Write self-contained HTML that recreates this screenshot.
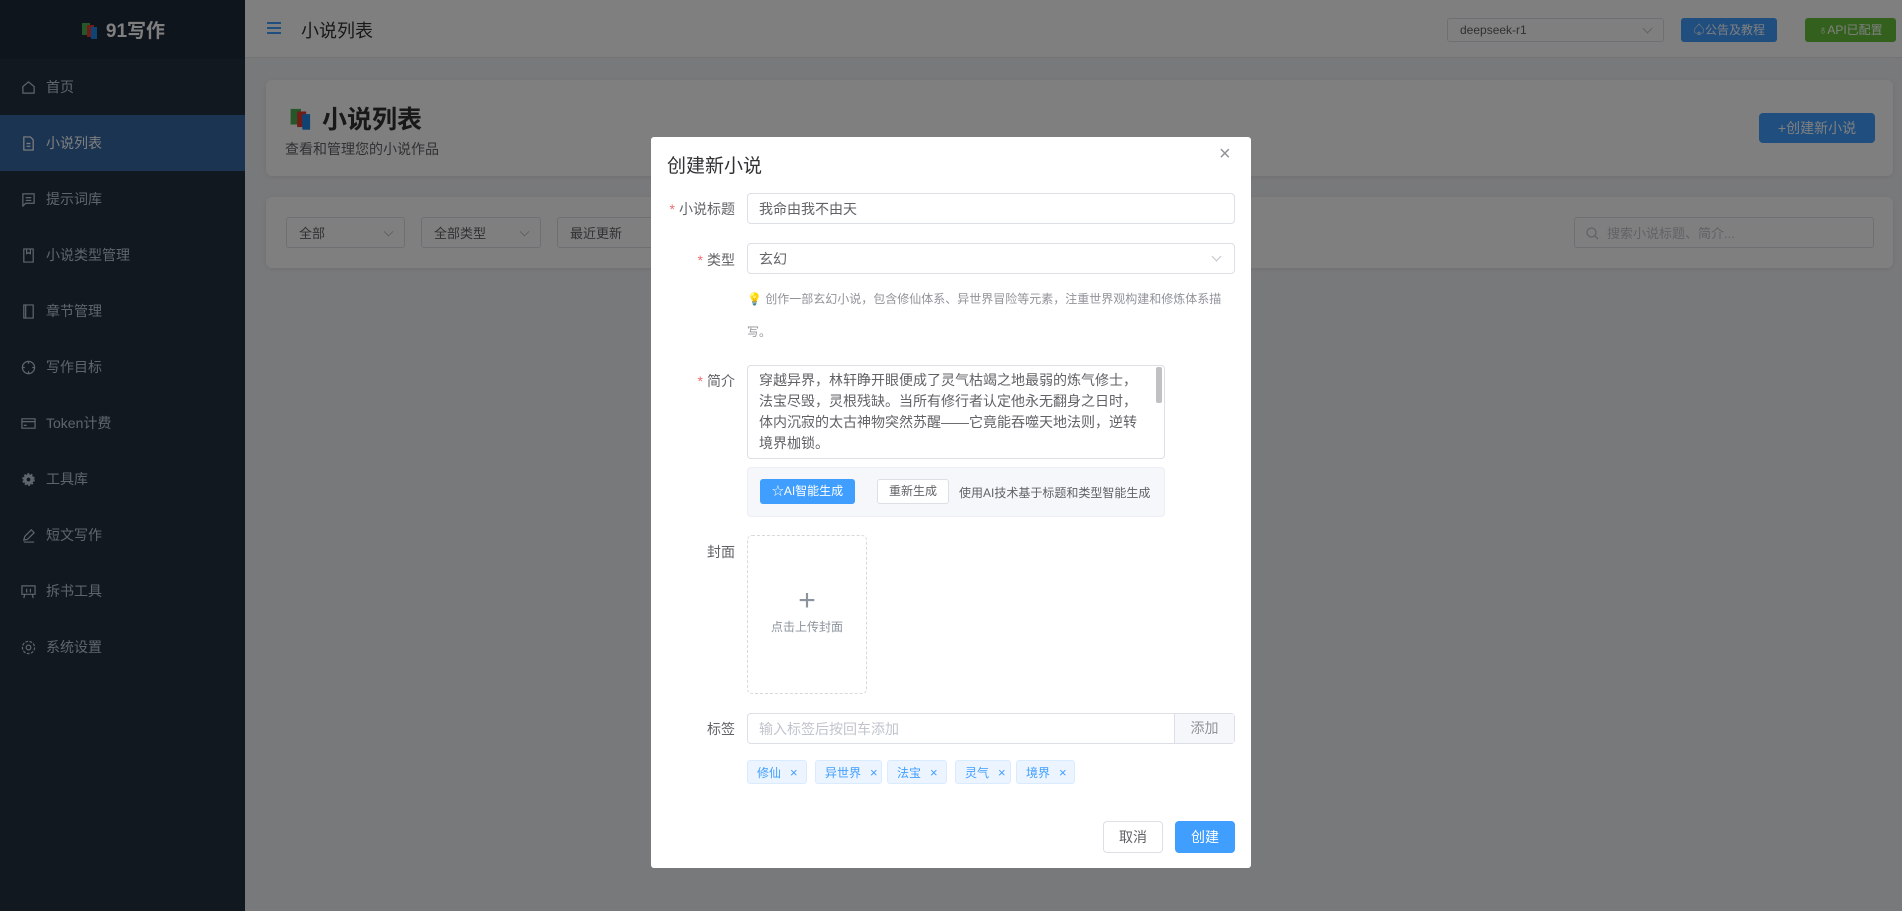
<!DOCTYPE html>
<html><head><meta charset="utf-8"><style>
*{box-sizing:border-box;margin:0;padding:0}
body{width:1902px;height:911px;overflow:hidden;font-family:"Liberation Sans","Noto Sans CJK SC",sans-serif;background:#f0f2f5;position:relative;color:#303133}
.side{position:absolute;left:0;top:0;width:245px;height:911px;background:#243141}
.logo{height:59px;background:#1f2a38;display:flex;align-items:center;justify-content:center;color:#fff;font-weight:bold;font-size:19px;gap:6px}
.mi{height:56px;display:flex;align-items:center;padding-left:21px;color:#bfcbd9;font-size:14px;gap:10px}
.mi svg{width:15px;height:15px;stroke:#bfcbd9;fill:none;stroke-width:1.3}
.mi.act{background:#3668a4;color:#fff}
.mi.act svg{stroke:#fff}
.hdr{position:absolute;left:245px;top:0;right:0;height:58px;background:#fff;border-bottom:1px solid #e6e6e6}
.abs{position:absolute}
.card{position:absolute;background:#fff;border-radius:6px;box-shadow:0 1px 4px rgba(0,0,0,.08)}
.sel{position:absolute;border:1px solid #dcdfe6;border-radius:3px;background:#fff;font-size:13px;color:#606266;padding-left:12px;display:flex;align-items:center}
.sel.dd:after{content:"";position:absolute;right:12px;top:50%;width:6px;height:6px;border-right:1px solid #c0c4cc;border-bottom:1px solid #c0c4cc;transform:translateY(-70%) rotate(45deg)}
.ov{position:absolute;inset:0;background:rgba(0,0,0,.5)}
.modal{position:absolute;left:651px;top:137px;width:600px;height:731px;background:#fff;border-radius:3px}
.lab{position:absolute;right:calc(100% - 84px);font-size:14px;color:#606266;white-space:nowrap}
.lab b{color:#f56c6c;font-weight:normal;margin-right:4px}
.inp{position:absolute;left:96px;width:488px;border:1px solid #dcdfe6;border-radius:4px;font-size:14px;color:#606266;padding-left:11px;display:flex;align-items:center}
.tag{position:absolute;top:623px;height:24px;background:#ecf5ff;border:1px solid #d9ecff;border-radius:3px;color:#409eff;font-size:12px;display:flex;align-items:center;padding-left:9px}
.tag span{margin-left:9px;font-size:13px}
</style></head><body>
<div class="side">
<div class="logo"><svg width="20" height="20" viewBox="0 0 20 20"><rect x="2" y="3" width="8" height="12" fill="#4caf50"/><rect x="7" y="5" width="7" height="12" fill="#e53935"/><rect x="11" y="7" width="6" height="12" fill="#1e88e5"/></svg>91写作</div>
<div class="mi"><svg viewBox="0 0 16 16"><path d="M2 7L8 2l6 5v7H2z"/></svg>首页</div>
<div class="mi act"><svg viewBox="0 0 16 16"><path d="M3 1h7l3 3v11H3z M6 8h4M6 11h4"/></svg>小说列表</div>
<div class="mi"><svg viewBox="0 0 16 16"><path d="M2 2h12v10H5l-3 3z M5 6h6M5 9h6"/></svg>提示词库</div>
<div class="mi"><svg viewBox="0 0 16 16"><path d="M3 1h10v14H3z M6 1v5l2-1 2 1V1"/></svg>小说类型管理</div>
<div class="mi"><svg viewBox="0 0 16 16"><path d="M3 1h10v14H3z M5 1v14"/></svg>章节管理</div>
<div class="mi"><svg viewBox="0 0 16 16"><circle cx="8" cy="8" r="6.5"/><path d="M8 1v3M8 12v3M1 8h3M12 8h3"/></svg>写作目标</div>
<div class="mi"><svg viewBox="0 0 16 16"><path d="M1 3h14v10H1z M1 6h14M3 10h3"/></svg>Token计费</div>
<div class="mi"><svg viewBox="0 0 16 16"><circle cx="8" cy="8" r="5.5" fill="#bfcbd9" stroke-dasharray="2 1.5" stroke-width="2.5"/><circle cx="8" cy="8" r="2" fill="#243141" stroke="none"/></svg>工具库</div>
<div class="mi"><svg viewBox="0 0 16 16"><path d="M3 13l1-4 7-7 3 3-7 7z M3 15h11"/></svg>短文写作</div>
<div class="mi"><svg viewBox="0 0 16 16"><path d="M1 2h14v9H1z M4 11l-1 4M12 11l1 4M6 5v4M10 5v4"/></svg>拆书工具</div>
<div class="mi"><svg viewBox="0 0 16 16"><circle cx="8" cy="8" r="2.5"/><circle cx="8" cy="8" r="6.5" stroke-dasharray="3 1.5"/></svg>系统设置</div>
</div>
<div class="hdr">
<div class="abs" style="left:22px;top:22px;width:14px;height:12px;border-top:2px solid #409eff;border-bottom:2px solid #409eff"><div style="margin-top:3px;height:2px;background:#409eff"></div></div>
<div class="abs" style="left:56px;top:17px;font-size:18px;color:#303133">小说列表</div>
<div class="sel dd" style="left:1202px;top:18px;width:217px;height:24px;font-size:12px">deepseek-r1</div>
<div class="abs" style="left:1436px;top:18px;width:96px;height:24px;background:#409eff;border-radius:3px;color:#fff;font-size:12px;text-align:center;line-height:24px">♤公告及教程</div>
<div class="abs" style="left:1560px;top:18px;width:91px;height:24px;background:#67c23a;border-radius:3px;color:#fff;font-size:12px;text-align:center;line-height:24px">♁API已配置</div>
</div>
<div class="card" style="left:266px;top:80px;width:1627px;height:96px">
<div class="abs" style="left:22px;top:20px;display:flex;align-items:center;gap:8px;font-size:25px;font-weight:bold"><svg width="26" height="26" viewBox="0 0 20 20"><rect x="2" y="3" width="8" height="12" fill="#4caf50"/><rect x="7" y="5" width="7" height="12" fill="#e53935"/><rect x="11" y="7" width="6" height="12" fill="#1e88e5"/></svg>小说列表</div>
<div class="abs" style="left:19px;top:59px;font-size:14px;color:#606266">查看和管理您的小说作品</div>
<div class="abs" style="left:1493px;top:33px;width:116px;height:30px;background:#409eff;border-radius:4px;color:#fff;font-size:14px;text-align:center;line-height:30px">+创建新小说</div>
</div>
<div class="card" style="left:266px;top:197px;width:1627px;height:71px">
<div class="sel dd" style="left:20px;top:20px;width:119px;height:31px">全部</div>
<div class="sel dd" style="left:155px;top:20px;width:120px;height:31px">全部类型</div>
<div class="sel dd" style="left:291px;top:20px;width:120px;height:31px">最近更新</div>
<div class="sel" style="left:1308px;top:20px;width:300px;height:31px;color:#c0c4cc;padding-left:32px"><svg style="position:absolute;left:11px;top:9px" width="13" height="13" viewBox="0 0 13 13" fill="none" stroke="#c0c4cc" stroke-width="1.3"><circle cx="5.5" cy="5.5" r="4.5"/><path d="M9 9l3 3"/></svg>搜索小说标题、简介...</div>
</div>
<div class="ov"></div>
<div class="modal">
<div class="abs" style="left:16px;top:14px;font-size:19px;color:#303133">创建新小说</div>
<div class="abs" style="left:568px;top:6px;font-size:20px;color:#909399">×</div>
<div class="lab" style="top:62px"><b>*</b>小说标题</div>
<div class="inp" style="top:56px;height:31px">我命由我不由天</div>
<div class="lab" style="top:113px"><b>*</b>类型</div>
<div class="inp" style="top:106px;height:31px">玄幻<div style="position:absolute;right:14px;top:9px;width:7px;height:7px;border-right:1px solid #c0c4cc;border-bottom:1px solid #c0c4cc;transform:rotate(45deg)"></div></div>
<div class="abs" style="left:96px;top:146px;width:490px;font-size:12px;color:#909399;line-height:33px"><span style="color:#e6a23c">💡</span> 创作一部玄幻小说，包含修仙体系、异世界冒险等元素，注重世界观构建和修炼体系描写。</div>
<div class="lab" style="top:234px"><b>*</b>简介</div>
<div class="inp" style="top:228px;height:94px;width:418px;align-items:flex-start;padding-top:4px;line-height:21px;font-size:14px;color:#606266;padding-right:14px">穿越异界，林轩睁开眼便成了灵气枯竭之地最弱的炼气修士，法宝尽毁，灵根残缺。当所有修行者认定他永无翻身之日时，体内沉寂的太古神物突然苏醒——它竟能吞噬天地法则，逆转境界枷锁。<div style="position:absolute;right:2px;top:1px;width:6px;height:36px;background:#c1c1c1;border-radius:2px"></div></div>
<div class="abs" style="left:96px;top:330px;width:418px;height:50px;background:#f5f7fa;border:1px solid #ebeef5;border-radius:4px">
<div class="abs" style="left:12px;top:11px;width:95px;height:25px;background:#409eff;border-radius:3px;color:#fff;font-size:12px;text-align:center;line-height:25px">☆AI智能生成</div>
<div class="abs" style="left:129px;top:11px;width:72px;height:25px;background:#fff;border:1px solid #dcdfe6;border-radius:3px;color:#606266;font-size:12px;text-align:center;line-height:23px">重新生成</div>
<div class="abs" style="left:211px;top:16px;font-size:12px;color:#606266">使用AI技术基于标题和类型智能生成</div>
</div>
<div class="lab" style="top:405px">封面</div>
<div class="abs" style="left:96px;top:398px;width:120px;height:159px;border:1px dashed #d9d9d9;border-radius:5px;text-align:center">
<div style="margin-top:50px;font-size:30px;color:#8c939d;font-weight:200;line-height:30px">+</div>
<div style="font-size:12px;color:#8c939d;margin-top:2px">点击上传封面</div></div>
<div class="lab" style="top:582px">标签</div>
<div class="inp" style="top:576px;height:31px;color:#c0c4cc">输入标签后按回车添加<div style="position:absolute;right:0;top:0;bottom:0;width:60px;background:#f5f7fa;border-left:1px solid #dcdfe6;color:#909399;text-align:center;line-height:29px">添加</div></div>
<div class="tag" style="left:96px;width:60px">修仙<span>×</span></div>
<div class="tag" style="left:164px;width:67px">异世界<span>×</span></div>
<div class="tag" style="left:236px;width:60px">法宝<span>×</span></div>
<div class="tag" style="left:304px;width:56px">灵气<span>×</span></div>
<div class="tag" style="left:365px;width:59px">境界<span>×</span></div>
<div class="abs" style="left:452px;top:684px;width:60px;height:32px;border:1px solid #dcdfe6;border-radius:4px;font-size:14px;color:#606266;text-align:center;line-height:30px">取消</div>
<div class="abs" style="left:524px;top:684px;width:60px;height:32px;background:#409eff;border-radius:4px;font-size:14px;color:#fff;text-align:center;line-height:32px">创建</div>
</div>
</body></html>
